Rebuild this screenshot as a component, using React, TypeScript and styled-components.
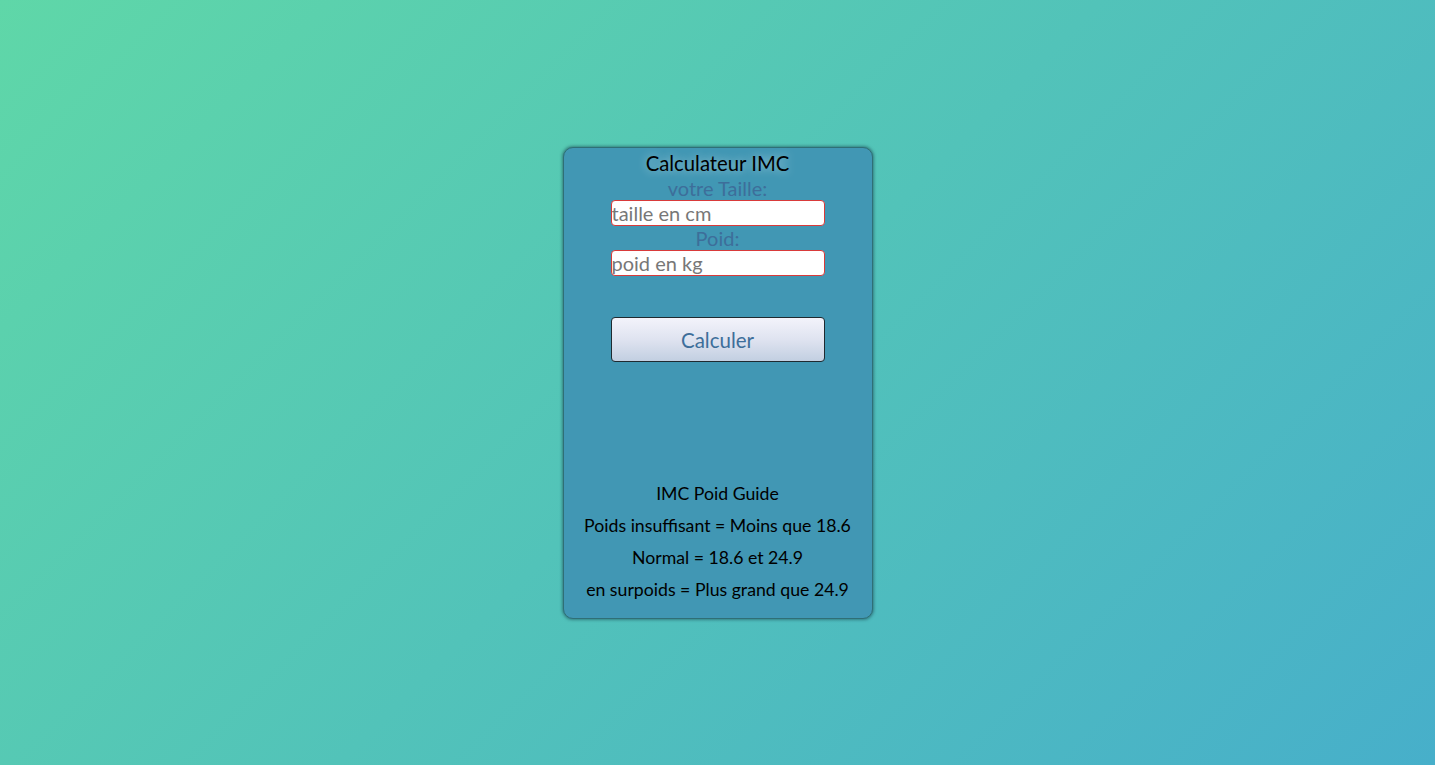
import React from "react";
import styled, { createGlobalStyle } from "styled-components";

const Global = createGlobalStyle`
  html, body { margin: 0; padding: 0; height: 100%; }
  body {
    font-family: Lato, "Open Sans", sans-serif;
    background: linear-gradient(135deg, #5fd7a8 0%, #52c3b9 50%, #47afca 100%);
    min-height: 765px;
  }
  #root { min-height: 765px; }
`;

const Page = styled.div`
  display: flex;
  justify-content: center;
  padding-top: 147px;
`;

const Card = styled.div`
  box-sizing: border-box;
  width: 310px;
  height: 472px;
  background: #4197b4;
  border: 1px solid #2f6f76;
  border-radius: 10px;
  box-shadow: 0 0 3px 1px rgba(30, 80, 90, 0.6);
  display: flex;
  flex-direction: column;
  align-items: center;
  padding: 3px 0 17px;
`;

const Title = styled.h1`
  margin: 0;
  font-size: 20.3px;
  line-height: 24px;
  font-weight: 400;
  color: #000;
  text-shadow: 0 0 10px rgba(255, 255, 255, 0.55);
`;

const Label = styled.label<{ $top?: number }>`
  font-size: 20px;
  line-height: 24px;
  color: #3d6e9a;
  margin-top: ${(p) => p.$top ?? 0}px;
`;

const Input = styled.input`
  box-sizing: border-box;
  width: 214px;
  height: 26px;
  border: 1px solid #d93a3a;
  border-radius: 4px;
  background: #fff;
  font-family: Lato, sans-serif;
  font-size: 20px;
  padding: 0;
  color: #333;
  outline: none;
  &::placeholder { color: #777; }
`;

const Button = styled.button`
  box-sizing: border-box;
  margin-top: 41px;
  width: 214px;
  height: 45px;
  border: 1px solid #1f2a30;
  border-radius: 4px;
  background: linear-gradient(to bottom, #f3f3fb 0%, #dfe3f0 50%, #c2cfe1 100%);
  font-family: Lato, sans-serif;
  font-size: 20.5px;
  color: #3d6e9a;
  cursor: pointer;
`;

const Guide = styled.div`
  margin-top: auto;
  display: flex;
  flex-direction: column;
  align-items: center;
  gap: 10px;
`;

const GuideLine = styled.p`
  margin: 0;
  font-size: 17.7px;
  line-height: 22px;
  color: #000;
`;

const lines = [
  "IMC Poid Guide",
  "Poids insuffisant = Moins que 18.6",
  "Normal = 18.6 et 24.9",
  "en surpoids = Plus grand que 24.9",
];

export default function App() {
  return (
    <>
      <Global />
      <Page>
        <Card>
          <Title>Calculateur IMC</Title>
          <Label $top={1}>votre Taille:</Label>
          <Input placeholder="taille en cm" />
          <Label>Poid:</Label>
          <Input placeholder="poid en kg" />
          <Button>Calculer</Button>
          <Guide>
            {lines.map((l) => (
              <GuideLine key={l}>{l}</GuideLine>
            ))}
          </Guide>
        </Card>
      </Page>
    </>
  );
}
